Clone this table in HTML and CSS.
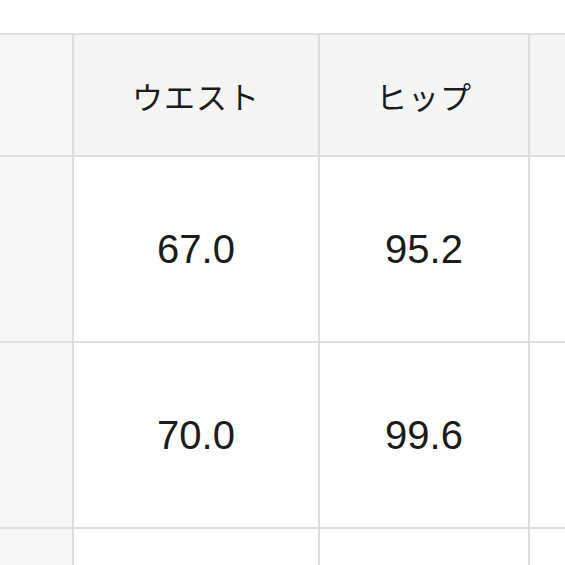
FILE: index.html
```html
<!DOCTYPE html>
<html lang="ja">
<head>
<meta charset="utf-8">
<link rel="stylesheet" href="styles.css">
</head>
<body>
<div class="page">
  <div class="table">
    <div class="cell head side"></div>
    <div class="cell head"><span class="jp">ウエスト</span></div>
    <div class="cell head"><span class="jp">ヒップ</span></div>
    <div class="cell head"></div>

    <div class="cell side"></div>
    <div class="cell data">67.0</div>
    <div class="cell data">95.2</div>
    <div class="cell data"></div>

    <div class="cell side"></div>
    <div class="cell data">70.0</div>
    <div class="cell data">99.6</div>
    <div class="cell data"></div>

    <div class="cell side last"></div>
    <div class="cell data last"></div>
    <div class="cell data last"></div>
    <div class="cell data last"></div>
  </div>
</div>
</body>
</html>
```

FILE: styles.css
```css
html, body {
  margin: 0;
  padding: 0;
  background: #ffffff;
  overflow: hidden;
}

.page {
  width: 565px;
  height: 565px;
  padding-top: 33px;
  box-sizing: border-box;
  overflow: hidden;
}

.table {
  display: grid;
  grid-template-columns: 72px 244px 208px 100px;
  grid-template-rows: 120px 184px 184px 60px;
  gap: 2px;
  padding-top: 2px;
  background: #dadde2;
  width: 640px;
}

.cell {
  display: flex;
  align-items: center;
  justify-content: center;
  background: #ffffff;
  color: #1b1b1b;
}

.head {
  background: #f5f5f6;
}

.side {
  background: #f6f6f7;
}

.jp {
  font-family: "Noto Sans CJK JP", "Noto Sans", sans-serif;
  font-size: 31px;
  font-weight: 400;
  letter-spacing: 1px;
}

.data {
  font-family: "Liberation Sans", Arial, sans-serif;
  font-size: 40px;
}
```
